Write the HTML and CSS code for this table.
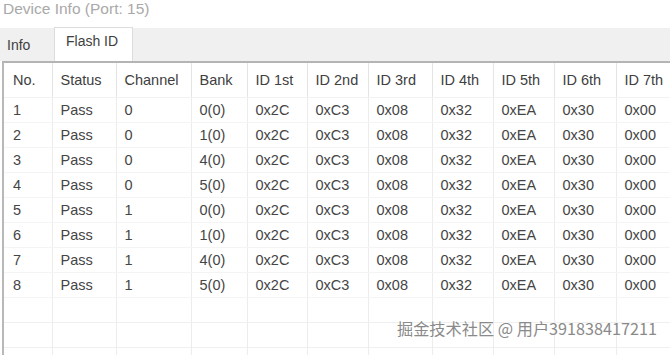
FILE: index.html
```html
<!DOCTYPE html>
<html>
<head>
<meta charset="utf-8">
<link rel="stylesheet" href="styles.css">
</head>
<body>
<div class="window">
  <div class="title">Device Info (Port: 15)</div>
  <div class="tabs">
    <div class="tab">Info</div>
    <div class="tab active">Flash ID</div>
  </div>
  <div class="panel">
    <table class="grid">
      <colgroup>
        <col style="width:48px"><col style="width:64px"><col style="width:75px"><col style="width:56px"><col style="width:60px"><col style="width:61px"><col style="width:64px"><col style="width:61px"><col style="width:61px"><col style="width:62px"><col style="width:60px">
      </colgroup>
      <thead>
        <tr><th>No.</th><th>Status</th><th>Channel</th><th>Bank</th><th>ID 1st</th><th>ID 2nd</th><th>ID 3rd</th><th>ID 4th</th><th>ID 5th</th><th>ID 6th</th><th>ID 7th</th></tr>
      </thead>
      <tbody>
        <tr><td>1</td><td>Pass</td><td>0</td><td>0(0)</td><td>0x2C</td><td>0xC3</td><td>0x08</td><td>0x32</td><td>0xEA</td><td>0x30</td><td>0x00</td></tr>
        <tr><td>2</td><td>Pass</td><td>0</td><td>1(0)</td><td>0x2C</td><td>0xC3</td><td>0x08</td><td>0x32</td><td>0xEA</td><td>0x30</td><td>0x00</td></tr>
        <tr><td>3</td><td>Pass</td><td>0</td><td>4(0)</td><td>0x2C</td><td>0xC3</td><td>0x08</td><td>0x32</td><td>0xEA</td><td>0x30</td><td>0x00</td></tr>
        <tr><td>4</td><td>Pass</td><td>0</td><td>5(0)</td><td>0x2C</td><td>0xC3</td><td>0x08</td><td>0x32</td><td>0xEA</td><td>0x30</td><td>0x00</td></tr>
        <tr><td>5</td><td>Pass</td><td>1</td><td>0(0)</td><td>0x2C</td><td>0xC3</td><td>0x08</td><td>0x32</td><td>0xEA</td><td>0x30</td><td>0x00</td></tr>
        <tr><td>6</td><td>Pass</td><td>1</td><td>1(0)</td><td>0x2C</td><td>0xC3</td><td>0x08</td><td>0x32</td><td>0xEA</td><td>0x30</td><td>0x00</td></tr>
        <tr><td>7</td><td>Pass</td><td>1</td><td>4(0)</td><td>0x2C</td><td>0xC3</td><td>0x08</td><td>0x32</td><td>0xEA</td><td>0x30</td><td>0x00</td></tr>
        <tr><td>8</td><td>Pass</td><td>1</td><td>5(0)</td><td>0x2C</td><td>0xC3</td><td>0x08</td><td>0x32</td><td>0xEA</td><td>0x30</td><td>0x00</td></tr>
        <tr class="empty"><td></td><td></td><td></td><td></td><td></td><td></td><td></td><td></td><td></td><td></td><td></td></tr>
        <tr class="empty"><td></td><td></td><td></td><td></td><td></td><td></td><td></td><td></td><td></td><td></td><td></td></tr>
        <tr class="empty"><td></td><td></td><td></td><td></td><td></td><td></td><td></td><td></td><td></td><td></td><td></td></tr>
      </tbody>
    </table>
  </div>
  <div class="watermark">掘金技术社区 @ 用户391838417211</div>
</div>
</body>
</html>
```
FILE: styles.css
```css
html, body {
  margin: 0;
  padding: 0;
  background: #ffffff;
}
.window {
  position: relative;
  width: 670px;
  height: 355px;
  overflow: hidden;
  font-family: "Liberation Sans", Arial, sans-serif;
  color: #454545;
}
.title {
  height: 28px;
  padding-left: 3px;
  font-size: 15.5px;
  line-height: 18px;
  color: #a9a9a9;
}
.tabs {
  display: flex;
  align-items: flex-end;
  height: 33px;
  background: #f0f0f0;
}
.tab {
  font-size: 14px;
  height: 31px;
  line-height: 30px;
  padding: 0 6px 0 7px;
  width: 41px;
  color: #3e3e3e;
}
.tab.active {
  background: #ffffff;
  line-height: 26px;
  width: 60px;
  padding: 0 6px 0 11px;
  border: 1px solid #dcdcdc;
  border-bottom: none;
  height: 33px;
}
.panel {
  margin-left: 2px;
  border-top: 2px solid #b4b4b4;
  border-left: 2px solid #b8b8b8;
  background: #ffffff;
  overflow: hidden;
  height: 300px;
}
.grid {
  border-collapse: collapse;
  table-layout: fixed;
  width: 672px;
  font-size: 14.5px;
}
.grid th, .grid td {
  text-align: left;
  font-weight: normal;
  padding: 0 0 0 8px;
  border-right: 1px solid #ececec;
  white-space: nowrap;
  overflow: hidden;
}
.grid th {
  height: 34px;
  color: #404040;
  border-right-color: #e4e4e4;
  border-bottom: 1px solid #f2f2f2;
}
.grid td {
  height: 24px;
  line-height: 24px;
  border-bottom: 1px solid #f4f4f4;
}
.grid td:first-child, .grid th:first-child {
  padding-left: 9px;
}
.grid tr.empty td {
  border-bottom-color: #efefef;
}
.watermark {
  position: absolute;
  left: 397px;
  top: 316px;
  font-family: "Noto Sans CJK SC", "Noto Sans", sans-serif;
  font-size: 16.2px;
  color: #8a8a8a;
  text-shadow: 0 0 2px #ffffff, 0 0 1px #ffffff;
  white-space: nowrap;
}
```
